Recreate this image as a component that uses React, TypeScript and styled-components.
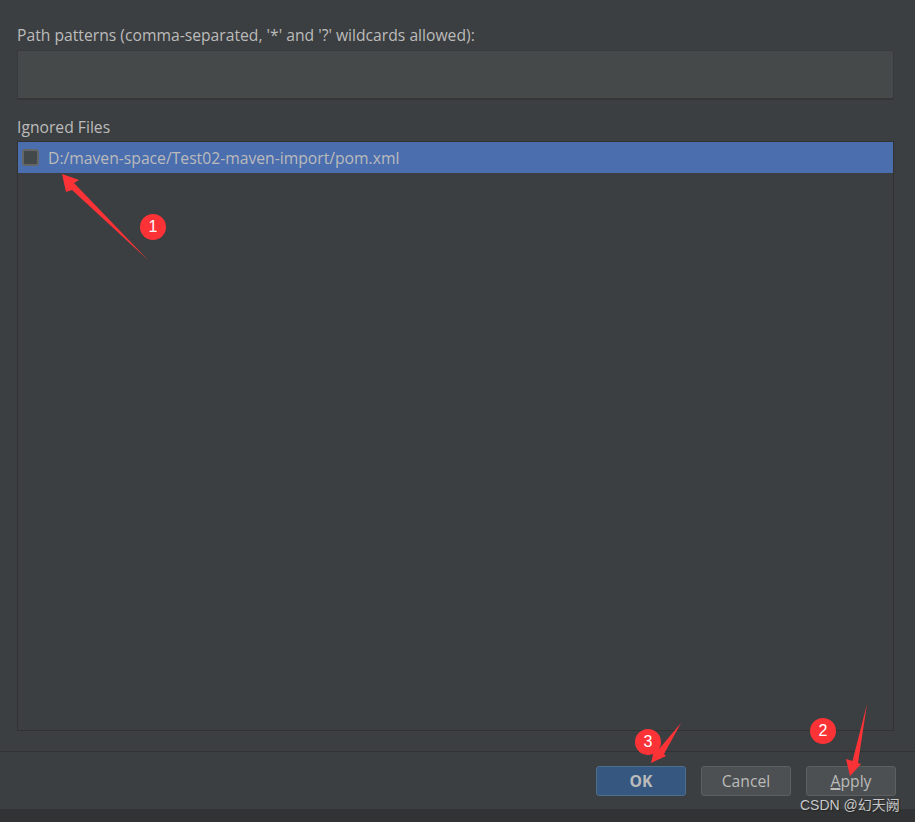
import styled, { createGlobalStyle } from "styled-components";

const GlobalStyle = createGlobalStyle`
  html, body {
    margin: 0;
    padding: 0;
    background: #3c3f41;
  }
`;

const Page = styled.div`
  position: relative;
  width: 915px;
  height: 822px;
  overflow: hidden;
  display: flex;
  flex-direction: column;
  background: #3c3f41;
  font-family: "Open Sans", "Liberation Sans", sans-serif;
  font-size: 15.7px;
  color: #bbbbbb;
`;

const Content = styled.div`
  height: 751px;
  box-sizing: border-box;
  padding: 26px 21px 0 17px;
  display: flex;
  flex-direction: column;
`;

const FieldLabel = styled.div`
  height: 18px;
  line-height: 18px;
  white-space: nowrap;
`;

const PatternInput = styled.div`
  margin-top: 6px;
  height: 50px;
  box-sizing: border-box;
  background: #45494a;
  border: 1px solid #383a3c;
  border-bottom: 2px solid #343638;
`;

const SectionLabel = styled(FieldLabel)`
  margin-top: 18px;
`;

const FileList = styled.div`
  margin-top: 5px;
  height: 590px;
  box-sizing: border-box;
  border: 1px solid #323232;
`;

const FileRow = styled.div`
  height: 31px;
  display: flex;
  align-items: center;
  gap: 9px;
  padding-left: 4px;
  background: #4b6eaf;
`;

const CheckBox = styled.span`
  width: 17px;
  height: 17px;
  box-sizing: border-box;
  margin-top: -1px;
  border: 2px solid #636566;
  border-radius: 3px;
  background: #43494a;
`;

const Footer = styled.div`
  height: 58px;
  border-top: 1px solid #323232;
  box-sizing: border-box;
  display: flex;
  justify-content: flex-end;
  gap: 15px;
  padding: 14px 19px 0 0;
`;

const Button = styled.div<{ $primary?: boolean }>`
  width: 90px;
  height: 30px;
  box-sizing: border-box;
  display: flex;
  align-items: center;
  justify-content: center;
  border-radius: 3px;
  border: 1px solid ${(p) => (p.$primary ? "#4c708c" : "#5e6060")};
  background: ${(p) => (p.$primary ? "#365880" : "#4c5052")};
  font-weight: ${(p) => (p.$primary ? 700 : 400)};
  color: #bbbbbb;
`;

const Mnemonic = styled.span`
  text-decoration: underline;
  text-decoration-thickness: 2px;
`;

const BottomStrip = styled.div`
  flex: 1;
  background: #323334;
`;

const Arrows = styled.svg`
  position: absolute;
  inset: 0;
  pointer-events: none;
`;

const Badge = styled.div<{ $x: number; $y: number }>`
  position: absolute;
  left: ${(p) => p.$x - 13}px;
  top: ${(p) => p.$y - 13}px;
  width: 26px;
  height: 26px;
  border-radius: 50%;
  background: #fb3337;
  color: #ffffff;
  display: flex;
  align-items: center;
  justify-content: center;
  font-family: "Liberation Sans", sans-serif;
  font-size: 16px;
`;

const Watermark = styled.div`
  position: absolute;
  left: 800px;
  top: 796px;
  font-family: "Liberation Sans", "Noto Sans CJK SC", sans-serif;
  font-size: 14px;
  line-height: 18px;
  color: #c8c9c9;
  text-shadow: 1px 1px 1px #222222;
  white-space: nowrap;
`;

const App = () => {
  return (
    <Page>
      <GlobalStyle />
      <Content>
        <FieldLabel>Path patterns (comma-separated, '*' and '?' wildcards allowed):</FieldLabel>
        <PatternInput />
        <SectionLabel>Ignored Files</SectionLabel>
        <FileList>
          <FileRow>
            <CheckBox />
            <span>D:/maven-space/Test02-maven-import/pom.xml</span>
          </FileRow>
        </FileList>
      </Content>
      <Footer>
        <Button $primary>OK</Button>
        <Button>Cancel</Button>
        <Button>
          <span>
            <Mnemonic>A</Mnemonic>pply
          </span>
        </Button>
      </Footer>
      <BottomStrip />
      <Arrows width="915" height="822" viewBox="0 0 915 822">
        <g fill="#fb3337">
          <polygon points="62,174 79,180 74,183 148,260 72,190 66,192" />
          <polygon points="850,776 846,759 852.5,761 867,704 858,763 861,764" />
          <polygon points="651,763 655,746 659,749 681,723 664,754 666,756" />
        </g>
      </Arrows>
      <Badge $x={153} $y={227}>1</Badge>
      <Badge $x={823} $y={731}>2</Badge>
      <Badge $x={648} $y={742}>3</Badge>
      <Watermark>CSDN @幻天阙</Watermark>
    </Page>
  );
};

export default App;
